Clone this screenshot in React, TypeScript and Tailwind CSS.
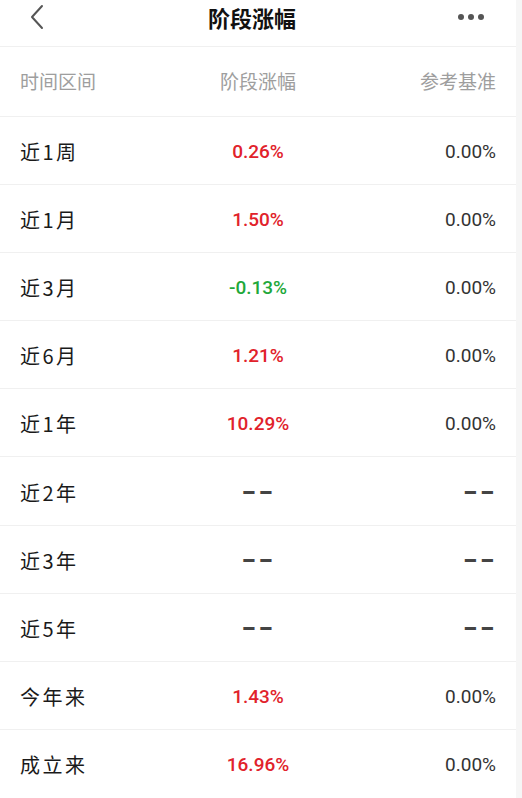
const rows: { label: string; value: string; tone: 'up' | 'down' | 'none'; base: string }[] = [
  { label: '近1周', value: '0.26%', tone: 'up', base: '0.00%' },
  { label: '近1月', value: '1.50%', tone: 'up', base: '0.00%' },
  { label: '近3月', value: '-0.13%', tone: 'down', base: '0.00%' },
  { label: '近6月', value: '1.21%', tone: 'up', base: '0.00%' },
  { label: '近1年', value: '10.29%', tone: 'up', base: '0.00%' },
  { label: '近2年', value: '--', tone: 'none', base: '--' },
  { label: '近3年', value: '--', tone: 'none', base: '--' },
  { label: '近5年', value: '--', tone: 'none', base: '--' },
  { label: '今年来', value: '1.43%', tone: 'up', base: '0.00%' },
  { label: '成立来', value: '16.96%', tone: 'up', base: '0.00%' },
];

const toneClass = {
  up: 'text-[#e1222b]',
  down: 'text-[#1fa83a]',
  none: 'text-[#333333]',
};

const cjk = "font-['Noto_Sans_CJK_SC',sans-serif]";
const num = "font-['Roboto','Noto_Sans_CJK_SC',sans-serif]";

// "--" placeholder is drawn wider and heavier than a plain hyphen pair
function Cell({ text, align }: { text: string; align: 'center' | 'right' }) {
  if (text !== '--') return <>{text}</>;
  return (
    <span
      className={`inline-block scale-x-[2] scale-y-[1.3] font-black text-[#444] ${align === 'right' ? 'origin-right' : 'origin-center'}`}
    >
      --
    </span>
  );
}

export default function App() {
  return (
    <div className="flex h-[798px] w-[522px] overflow-hidden bg-[#f6f6f6]">
      <div className="flex w-[516px] flex-col bg-white">
        {/* top bar */}
        <header className="flex h-[47px] items-center justify-between border-b border-[#f0f0f0] px-[28px]">
          <svg width="18" height="26" viewBox="0 0 18 26" fill="none" className="-mt-[12px]">
            <path d="M14 2 L4 13 L14 24" stroke="#555" strokeWidth="2" strokeLinecap="round" strokeLinejoin="round" />
          </svg>
          <h1 className={`${cjk} -mt-[11px] text-[22px] font-bold text-[#111]`}>阶段涨幅</h1>
          <div className="-mt-[12px] flex gap-[4px] pr-[4px]">
            <span className="h-[6px] w-[6px] rounded-full bg-[#555]" />
            <span className="h-[6px] w-[6px] rounded-full bg-[#555]" />
            <span className="h-[6px] w-[6px] rounded-full bg-[#555]" />
          </div>
        </header>

        {/* column heads */}
        <div className={`${cjk} grid h-[70px] grid-cols-3 items-center border-b border-[#f0f0f0] px-[20px] text-[19px] text-[#9e9e9e]`}>
          <span>时间区间</span>
          <span className="text-center">阶段涨幅</span>
          <span className="text-right">参考基准</span>
        </div>

        {rows.map((r, i) => (
          <div
            key={r.label}
            className={`grid h-[68.1px] grid-cols-3 items-center px-[20px] pt-[3px] ${i < rows.length - 1 ? 'border-b border-[#f0f0f0]' : ''}`}
          >
            <span className={`${cjk} text-[20px] tracking-[2.5px] text-[#1a1a1a]`}>{r.label}</span>
            <span className={`${num} text-center text-[19px] font-medium ${toneClass[r.tone]}`}>
              <Cell text={r.value} align="center" />
            </span>
            <span className={`${num} text-right text-[19px] text-[#333333]`}>
              <Cell text={r.base} align="right" />
            </span>
          </div>
        ))}
      </div>
    </div>
  );
}
